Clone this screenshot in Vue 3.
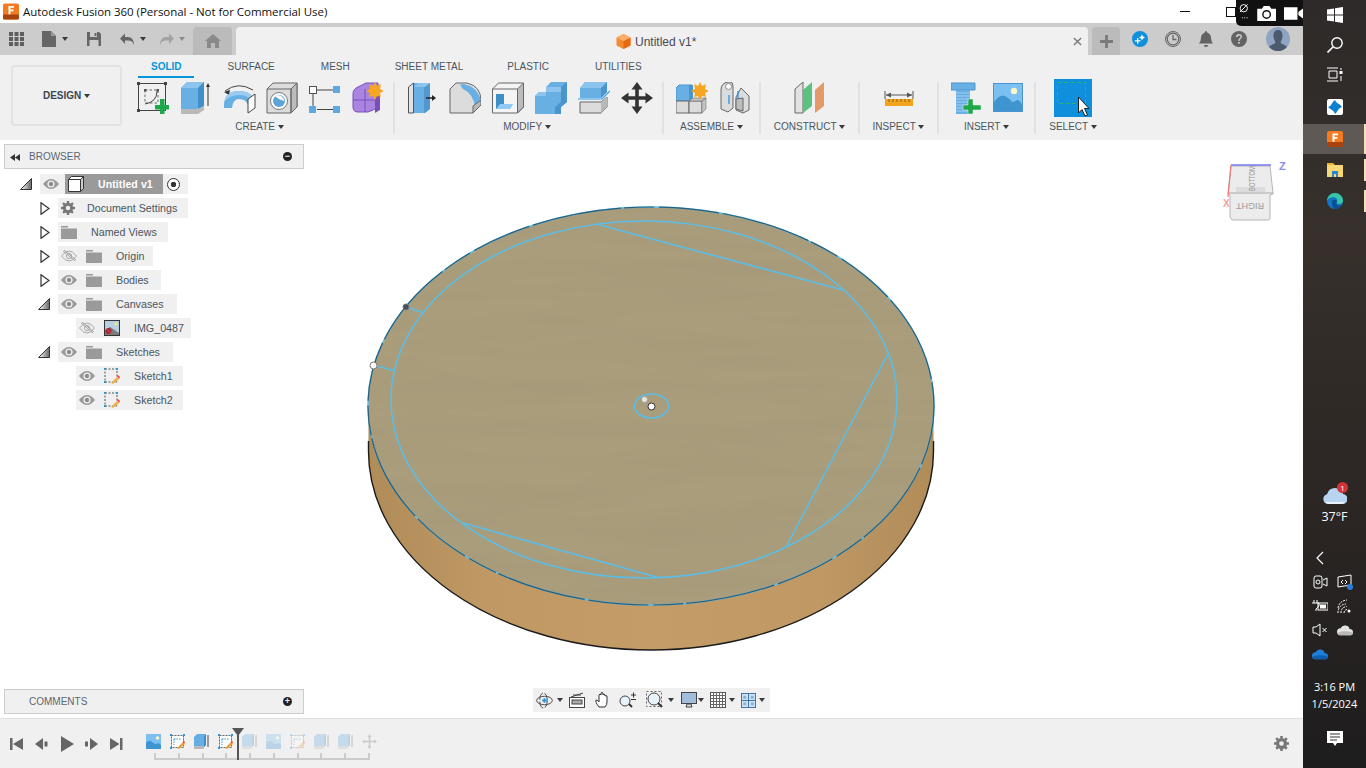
<script setup>
const ribbonTabs = ["SOLID", "SURFACE", "MESH", "SHEET METAL", "PLASTIC", "UTILITIES"];

const tree = [
  { left: 40, arrow: "open", eye: "on", icon: "root", label: "Untitled v1", width: 148 },
  { left: 58, arrow: "closed", icon: "gear", label: "Document Settings", gap: 12, width: 130 },
  { left: 58, arrow: "closed", icon: "folder", label: "Named Views", gap: 14, width: 110 },
  { left: 58, arrow: "closed", eye: "off", icon: "folder", label: "Origin", gap: 14, width: 95 },
  { left: 58, arrow: "closed", eye: "on", icon: "folder", label: "Bodies", gap: 14, width: 103 },
  { left: 58, arrow: "open", eye: "on", icon: "folder", label: "Canvases", gap: 14, width: 119 },
  { left: 76, eye: "off", icon: "canvas", label: "IMG_0487", gap: 14, width: 115 },
  { left: 58, arrow: "open", eye: "on", icon: "folder", label: "Sketches", gap: 14, width: 115 },
  { left: 76, eye: "on", icon: "sketch", label: "Sketch1", gap: 14, width: 107 },
  { left: 76, eye: "on", icon: "sketch", label: "Sketch2", gap: 14, width: 107 },
];

const history = [
  { icon: "t-image" },
  { icon: "t-sketch" },
  { icon: "t-extrude" },
  { icon: "t-sketch" },
  { icon: "t-extrude", faded: true },
  { icon: "t-image", faded: true },
  { icon: "t-sketch", faded: true },
  { icon: "t-extrude", faded: true },
  { icon: "t-extrude", faded: true },
  { icon: "t-move", faded: true },
];
</script>

<template>
  <div class="screen">
    <svg class="sprite" aria-hidden="true">
      <defs>
        <symbol id="t-image" viewBox="0 0 15 15">
          <rect width="15" height="15" fill="#7cc0f2" />
          <path d="M0 15V9q3-4 6-1 2 2 4 2 3-2 5 1v4z" fill="#3f95cf" />
          <circle cx="11.5" cy="4" r="1.8" fill="#fbf6c8" />
        </symbol>
        <symbol id="t-sketch" viewBox="0 0 15 15">
          <rect x="1.5" y="1.5" width="12" height="12" fill="#fff" stroke="#666" stroke-dasharray="2 1" />
          <path d="M0 0h2v2H0zM13 0h2v2h-2zM0 13h2v2H0z" fill="#2c97de" />
          <path d="M4 5h7M4 5v6" stroke="#2c97de" stroke-dasharray="1.5 1" fill="none" />
          <path d="M7 14l6-6 2 2-6 5z" fill="#e8a13a" />
          <path d="M12.5 8l1.5-1.5 1 2-1 1z" fill="#e64545" />
        </symbol>
        <symbol id="t-extrude" viewBox="0 0 15 15">
          <path d="M0 3l3-3h9v11l-2 2H0z" fill="#65ade3" />
          <path d="M0 12h10v3H0z" fill="#b9b9b9" />
          <path d="M10 3l2-3v11l-2 2z" fill="#3f8ec6" />
          <path d="M14 1v12" stroke="#444" />
        </symbol>
        <symbol id="t-move" viewBox="0 0 15 15">
          <path d="M7.500 0l2 3h-1.200v3.700H12V5.500l3 2-3 2V8.300H8.300V12h1.200l-2 3-2-3h1.200V8.300H3v1.200l-3-2 3-2v1.200h3.700V3H5.500z" fill="#777" />
        </symbol>
        <symbol id="eye-on" viewBox="0 0 16 12">
          <path d="M0 6q4-5 8-5t8 5q-4 5-8 5T0 6z" fill="#9a9a9a" />
          <circle cx="8" cy="6" r="3.600" fill="#f0f0f0" />
          <circle cx="8" cy="6" r="2.200" fill="#8c8c8c" />
        </symbol>
        <symbol id="eye-off" viewBox="0 0 16 12">
          <path d="M.5 6q4-5 7.500-5t7.500 5q-4 5-7.500 5T.5 6z" fill="none" stroke="#a5a5a5" />
          <circle cx="8" cy="6" r="2.600" fill="none" stroke="#a5a5a5" />
          <path d="M2 1l12 10M3 0l12 10" stroke="#a5a5a5" />
        </symbol>
        <symbol id="folder" viewBox="0 0 16 14">
          <path d="M0 1h7v1.500H0zM0 3.500h16V14H0z" fill="#9a9a9a" />
        </symbol>
        <symbol id="gear" viewBox="0 0 14 14">
          <circle cx="7" cy="7" r="3.700" fill="none" stroke="#777" stroke-width="3" />
          <path d="M7 0v14M0 7h14M2 2l10 10M12 2L2 12" stroke="#777" stroke-width="2.400" stroke-dasharray="2.300 9.400" />
        </symbol>
        <symbol id="canvas" viewBox="0 0 16 16">
          <rect x=".5" y=".5" width="15" height="15" fill="#b7cfe0" stroke="#333" />
          <path d="M1 15V10l5-3 9 6v2z" fill="#7b7b7b" />
          <circle cx="12" cy="4" r="1.600" fill="#f3e58b" />
          <circle cx="4.500" cy="11" r="3" fill="#a32a35" />
          <path d="M2.500 9l4 4" stroke="#e1434f" />
        </symbol>
        <symbol id="sketch" viewBox="0 0 16 16">
          <rect x="1" y="1" width="12" height="13" fill="none" stroke="#555" stroke-dasharray="2 1.500" />
          <path d="M0 0h2v2H0zM12 0h2v2h-2zM0 13h2v2H0z" fill="#2c97de" />
          <path d="M7 15l6-6 2 2-6 5z" fill="#ecb044" />
          <path d="M13 8l1-1 2 2-1 2z" fill="#e64545" />
        </symbol>
      </defs>
    </svg>

    <div class="app">
      <header class="titlebar">
        <svg class="title-logo" viewBox="0 0 16 16">
          <rect width="16" height="16" rx="2" fill="#f47a20" />
          <rect y="11" width="16" height="5" rx="1" fill="#a8430f" />
          <path d="M5.500 2.500h5.500v1.800H7.500v1.700h3v1.700h-3v3h-2z" fill="#fff" />
        </svg>
        <span class="title-text">Autodesk Fusion 360 (Personal - Not for Commercial Use)</span>
        <div class="win-controls">
          <span class="win-min"></span>
          <span class="win-restore"></span>
        </div>
      </header>

      <div class="tabbar">
        <div class="quick">
          <svg class="q-grid" viewBox="0 0 15 14">
            <path d="M0 0h4v4H0zM5.500 0h4v4h-4zM11 0h4v4h-4zM0 5h4v4H0zM5.500 5h4v4h-4zM11 5h4v4h-4zM0 10h4v4H0zM5.500 10h4v4h-4zM11 10h4v4h-4z" fill="#5f5f5f" />
          </svg>
          <svg class="q-file" viewBox="0 0 14 16"><path d="M0 0h9l5 5v11H0z" fill="#666" /><path d="M9 0v5h5z" fill="#999" /></svg>
          <i class="caret q-caret1"></i>
          <svg class="q-save" viewBox="0 0 14 14">
            <path d="M0 0h12l2 2v12H0z" fill="#666" />
            <path d="M3 0h7v5H3zM2.500 8h9v6h-9z" fill="#ccc" />
            <path d="M7.500 1h2v3h-2z" fill="#666" />
          </svg>
          <svg class="q-undo" viewBox="0 0 14 12"><path d="M5 0v3.500h3q6 0 6 8.500-1-5-6-5H5v3.500L0 5z" fill="#666" /></svg>
          <i class="caret q-caret2"></i>
          <svg class="q-redo" viewBox="0 0 14 12"><path d="M9 0v3.500H6Q0 3.500 0 12q1-5 6-5h3v3.500L14 5z" fill="#a3a3a3" /></svg>
          <i class="caret q-caret3"></i>
        </div>
        <div class="home-tab">
          <svg viewBox="0 0 16 14"><path d="M8 0l8 7h-2v7h-4V9H6v5H2V7H0z" fill="#8a8a8a" /></svg>
        </div>
        <div class="doc-tab">
          <div class="doc-title">
            <svg viewBox="0 0 15 15">
              <path d="M7.500 0L14.500 3.500v8L7.500 15 .5 11.500v-8z" fill="#f48b30" />
              <path d="M7.500 7L14.500 3.500v8L7.500 15z" fill="#e76a12" />
              <path d="M7.500 0L14.500 3.500 7.500 7 .5 3.500z" fill="#f9ae6b" />
            </svg>
            <span>Untitled v1*</span>
          </div>
          <svg class="doc-close" viewBox="0 0 10 10"><path d="M1 1l8 8M9 1l-8 8" stroke="#777" stroke-width="1.500" /></svg>
        </div>
        <div class="plus-tab">
          <svg viewBox="0 0 14 14"><path d="M5.500 0h3v5.500H14v3H8.500V14h-3V8.500H0v-3h5.500z" fill="#7a7a7a" /></svg>
        </div>
        <div class="account">
          <svg class="a-ext" viewBox="0 0 16 16">
            <circle cx="8" cy="8" r="8" fill="#0f8fdc" />
            <path d="M5 7v2.200H2.800v1.300H5v2.200h1.300v-2.200h2.200V9.200H6.300V7z" fill="#fff" />
            <path d="M10 3.500l1 2 2 1-2 1-1 2-1-2-2-1 2-1z" fill="#fff" />
          </svg>
          <svg class="a-clock" viewBox="0 0 16 16">
            <circle cx="8" cy="8" r="7.500" fill="none" stroke="#666" />
            <circle cx="8" cy="8" r="5.800" fill="none" stroke="#666" stroke-width="1.300" />
            <path d="M8 4v4.500h3.500" fill="none" stroke="#666" stroke-width="1.300" />
          </svg>
          <svg class="a-bell" viewBox="0 0 14 16">
            <path d="M7 0q1.200 0 1.200 1.500Q12 3 12 7q0 3 2 5.500H0Q2 10 2 7q0-4 3.800-5.500Q5.800 0 7 0z" fill="#636363" />
            <path d="M5 14h4a2 2 0 0 1-4 0z" fill="#636363" />
          </svg>
          <svg class="a-help" viewBox="0 0 16 16">
            <circle cx="8" cy="8" r="8" fill="#636363" />
            <path d="M5 6q0-3 3-3t3 2.700q0 1.500-1.500 2.300Q8.700 8.500 8.700 10H7.200q0-2.200 1.500-3 .9-.5.900-1.200 0-1.300-1.500-1.300-1.400 0-1.500 1.500zM7.100 11h1.700v1.800H7.100z" fill="#ccc" />
          </svg>
          <svg class="a-user" viewBox="0 0 24 24">
            <circle cx="12" cy="12" r="12" fill="#8ea4c1" />
            <path d="M12 3q5 0 4.500 7-.5 3-2 5 0 1.500 3 2.500Q20 18.500 21 20a12 12 0 0 1-18 0q1-1.500 3.500-2.500 3-1 3-2.500-1.500-2-2-5Q7 3 12 3z" fill="#4c5a70" />
          </svg>
        </div>
      </div>

      <div class="toolbar">
        <button class="design">DESIGN <i class="caret"></i></button>
        <div class="ribbon">
          <nav class="ribbon-tabs">
            <span v-for="(t, i) in ribbonTabs" :key="t" :class="{ active: i === 0 }">{{ t }}</span>
          </nav>
          <div class="groups">
            <section class="group g-create">
              <div class="icons">
                <svg class="ico" viewBox="0 0 32 32">
                  <rect x="1.500" y="1.500" width="27" height="27" fill="none" stroke="#444" />
                  <path d="M0 0h3v3H0zM27 0h3v3h-3zM0 27h3v3H0z" fill="#444" />
                  <rect x="8" y="8" width="13" height="13" fill="none" stroke="#666" stroke-dasharray="2.500 2" />
                  <path d="M20 9q0 11-12 13" fill="none" stroke="#444" />
                  <path d="M7 7h2.500v2.500H7zM19.500 7H22v2.500h-2.500z" fill="#555" />
                  <path d="M23 17h4.500v6H32v4.500h-4.500V32H23v-4.500h-5V23h5z" fill="#1fa84a" />
                </svg>
                <svg class="ico" viewBox="0 0 32 32">
                  <path d="M1 6l6-6h17v24l-7 3H1z" fill="#68afe4" />
                  <path d="M1 6L7 0h17l-6 6z" fill="#8cc4ee" />
                  <path d="M18 6l6-6v24l-6 3z" fill="#418fc9" />
                  <path d="M1 27h17l6-3v4l-6 4H1z" fill="#b9b9b9" />
                  <path d="M28 24V3" stroke="#333" />
                  <path d="M26 5l2-4 2 4z" fill="#333" />
                </svg>
                <svg class="ico ico-wide" viewBox="0 0 34 32">
                  <path d="M2 9Q15-1 30 8" fill="none" stroke="#444" />
                  <path d="M1 10l6-2-1 5z" fill="#333" />
                  <path d="M1 26Q0 9 16 9q10 0 14 6l-5 8q-2-6-9-6-6 0-7 9z" fill="#68afe4" />
                  <path d="M2 17Q6 9 16 9q10 0 14 6l-2 3q-4-5-12-5-9 0-14 6z" fill="#9acbf0" />
                  <path d="M25 17l7-5v14l-7 5z" fill="#fff" stroke="#444" />
                </svg>
                <svg class="ico" viewBox="0 0 32 32">
                  <path d="M1 7l6-6h24v24l-6 6H1z" fill="#dcdcdc" stroke="#666" />
                  <path d="M25 7l6-6v24l-6 6z" fill="#bcbcbc" stroke="#666" />
                  <path d="M1 7h24v24" fill="none" stroke="#666" />
                  <circle cx="13" cy="19" r="8.500" fill="#fff" stroke="#777" />
                  <circle cx="13" cy="19" r="6" fill="#5ba4da" />
                  <path d="M9 14a6 6 0 0 1 9 5q-3-1-5-2t-4-3z" fill="#fff" />
                </svg>
                <svg class="ico" viewBox="0 0 32 32">
                  <rect x=".5" y="4.500" width="7" height="7" fill="#fff" stroke="#555" />
                  <rect x="24" y="4" width="7" height="7" fill="#5ea9e0" />
                  <rect y="24" width="7" height="7" fill="#5ea9e0" />
                  <rect x="24" y="24" width="7" height="7" fill="#5ea9e0" />
                  <path d="M8 8h16M4 12v12M8 27.500h16" stroke="#444" />
                </svg>
                <svg class="ico" viewBox="0 0 32 32">
                  <path d="M1 12q0-5 5-7l8-4h12v20q0 5-5 7l-5 2H6q-5 0-5-5z" fill="#a984e0" stroke="#7650b8" />
                  <path d="M1 18h23M13 7v23" stroke="#7650b8" />
                  <path d="M23 15l5-2v15l-5 3z" fill="#7650b8" />
                  <path d="M23 0l2 4 4-2-1 5 4 2-4 2 1 4-4-1-2 4-2-4-4 1 1-4-4-2 4-2-1-5 4 2z" fill="#f5a623" />
                </svg>
              </div>
              <div class="g-label">CREATE <i class="caret"></i></div>
            </section>

            <section class="group g-modify">
              <div class="icons">
                <svg class="ico" viewBox="0 0 32 32">
                  <path d="M2.500 5l5-4v30h-5z" fill="#e2e2e2" stroke="#555" />
                  <path d="M8 1h16v26l-5 4H8z" fill="#5098cf" />
                  <path d="M8 1h10v30H8z" fill="#68afe4" />
                  <path d="M8 5l4-4h12l-5 4z" fill="#8cc4ee" />
                  <path d="M20 16h8" stroke="#222" stroke-width="1.500" />
                  <path d="M26 13l4 3-4 3z" fill="#222" />
                </svg>
                <svg class="ico" viewBox="0 0 32 32">
                  <path d="M1 7l6-6h11q14 3 14 18v4l-8 8H1z" fill="#dcdcdc" stroke="#666" />
                  <path d="M13 2q14 1 19 16l-6 8q-1-14-12-19l-3-4z" fill="#68afe4" />
                  <path d="M32 18v5l-8 8V24z" fill="#b9b9b9" stroke="#666" />
                </svg>
                <svg class="ico" viewBox="0 0 32 32">
                  <path d="M.5 7l6-6h25v24l-6 6H.5z" fill="#f4f4f4" stroke="#666" />
                  <path d="M25.500 7l6-6v24l-6 6z" fill="#bdbdbd" stroke="#666" />
                  <path d="M.5 7h25v24" fill="none" stroke="#666" />
                  <path d="M4 12h8v15H4z" fill="#3f8ec6" />
                  <path d="M12 12h7v10h-7z" fill="#f4f4f4" />
                  <path d="M4 27l4-5h13l-3 5z" fill="#8fcaf6" />
                  <path d="M12 22h9l-3 5H7z" fill="#8fcaf6" />
                </svg>
                <svg class="ico" viewBox="0 0 32 32">
                  <path d="M11 5l5-5h16v20l-6 5v7H0V14l4-4h7z" fill="#68afe4" />
                  <path d="M11 5h15v5H11zM0 14l4-4h7v4z" fill="#8cc4ee" />
                  <path d="M26 5l6-5v20l-6 5zM20 25l6-5v12h-6z" fill="#4a95cd" />
                </svg>
                <svg class="ico" viewBox="0 0 32 32">
                  <path d="M2 6l5-6h22v10l-6 6H2z" fill="#68afe4" />
                  <path d="M2 6l5-6h22l-6 6z" fill="#8cc4ee" />
                  <path d="M23 6l6-6v10l-6 6z" fill="#4a95cd" />
                  <path d="M0 17h24l8-8" stroke="#2f9be6" stroke-width="1.200" fill="none" />
                  <path d="M2 20h21l6-5v10l-6 6H2z" fill="#dcdcdc" stroke="#666" />
                  <path d="M23 20l6-5v10l-6 6z" fill="#b9b9b9" />
                </svg>
                <svg class="ico" viewBox="0 0 32 32">
                  <path d="M16 0l5.500 7.500h-3.700v6.700h6.700v-3.700L32 16l-7.500 5.500v-3.700h-6.700v6.700h3.700L16 32l-5.500-7.500h3.700v-6.700H7.500v3.700L0 16l7.500-5.500v3.700h6.700V7.500h-3.700z" fill="#333" />
                </svg>
              </div>
              <div class="g-label">MODIFY <i class="caret"></i></div>
            </section>

            <section class="group g-assemble">
              <div class="icons">
                <svg class="ico" viewBox="0 0 32 32">
                  <path d="M0 6l3-3h13v16H0z" fill="#68afe4" stroke="#4a95cd" />
                  <path d="M13 3h4v16h-4z" fill="#4a95cd" />
                  <path d="M0 19h13v12H0z" fill="#dcdcdc" stroke="#666" />
                  <path d="M13 19h13v12H13z" fill="#dcdcdc" stroke="#666" />
                  <path d="M13 19l4-3h13l-4 3zM26 19l4-3v11l-4 4z" fill="#c4c4c4" stroke="#777" stroke-width=".6" />
                  <path d="M24 0l2 4 4-2-1 5 4 2-4 2 1 4-4-1-2 4-2-4-4 1 1-4-4-2 4-2-1-5 4 2z" fill="#f5a623" />
                </svg>
                <svg class="ico" viewBox="0 0 30 32">
                  <path d="M1 8q0-7 7-8h2q3 0 3 4v22l-5 4-7-3z" fill="#dcdcdc" stroke="#666" />
                  <circle cx="8.500" cy="4.500" r="3" fill="#fff" stroke="#888" />
                  <path d="M16 15l5-9 8 8v14l-6 3-7-3z" fill="#dcdcdc" stroke="#666" />
                  <path d="M16 17l7-1v13l-7-2z" fill="#bdbdbd" stroke="#666" />
                  <path d="M9 13v9M18 9v8" stroke="#1c8ee0" stroke-width="1.200" />
                </svg>
              </div>
              <div class="g-label">ASSEMBLE <i class="caret"></i></div>
            </section>

            <section class="group g-construct">
              <div class="icons">
                <svg class="ico" viewBox="0 0 32 32">
                  <path d="M1 7l8-7v31H1z" fill="#e2e2e2" stroke="#666" />
                  <path d="M9 31V8l9-8v24z" fill="#5bc17f" />
                  <path d="M21 31V8l9-8v24z" fill="#e49a68" />
                </svg>
              </div>
              <div class="g-label">CONSTRUCT <i class="caret"></i></div>
            </section>

            <section class="group g-inspect">
              <div class="icons">
                <svg class="ico" viewBox="0 0 32 32">
                  <path d="M2 9v8M30 9v8M3 13h26" stroke="#555" />
                  <path d="M3 13l5-2.500v5zM29 13l-5-2.500v5z" fill="#555" />
                  <rect x="2" y="17" width="28" height="7" fill="#f2a51c" />
                  <path d="M6 17v3M10 17v3M14 17v3M18 17v3M22 17v3M26 17v3" stroke="#8a5f10" />
                </svg>
              </div>
              <div class="g-label">INSPECT <i class="caret"></i></div>
            </section>

            <section class="group g-insert">
              <div class="icons">
                <svg class="ins-bolt" viewBox="0 0 30 32">
                  <path d="M0 1h24v7H0z" fill="#68afe4" stroke="#4a95cd" />
                  <path d="M5 8h14v24H5z" fill="#68afe4" />
                  <path d="M5 11h14M5 14h14M5 17h14M5 20h14M5 23h14M5 26h14M5 29h14" stroke="#a0d0f2" />
                  <path d="M17 17h5v6h8v5h-8v4h-5v-4h-5v-5h5z" fill="#1fa84a" stroke="#f0f0f0" stroke-width=".5" />
                </svg>
                <svg class="ins-image" viewBox="0 0 30 30">
                  <rect x=".5" y=".5" width="29" height="28" fill="#7cc0f2" stroke="#4a95cd" />
                  <path d="M1 28V19q6-8 11-6 4 2 7 6 3 0 5-2 3 0 5 5v6z" fill="#3f95cf" />
                  <circle cx="21" cy="8" r="3.200" fill="#fbf6c8" />
                </svg>
              </div>
              <div class="g-label">INSERT <i class="caret"></i></div>
            </section>

            <section class="group g-select">
              <div class="icons">
                <svg class="sel-ico" viewBox="0 0 38 38">
                  <rect width="38" height="38" fill="#0f8fdc" />
                  <rect x="3.500" y="3.500" width="28" height="21" fill="none" stroke="#2bb36a" stroke-dasharray="4 2.500" />
                  <path d="M24.500 18v16l3.500-3.500 3 6.500 2.500-1-3-6.500H35z" fill="#fff" stroke="#222" />
                </svg>
              </div>
              <div class="g-label">SELECT <i class="caret"></i></div>
            </section>
          </div>
        </div>
      </div>

      <main class="canvas">
        <svg class="scene" viewBox="0 140 1303 578">
          <defs>
            <linearGradient id="side" x1="0" x2="1" y1="0" y2="0">
              <stop offset="0" stop-color="#b08c58" />
              <stop offset=".2" stop-color="#bf9864" />
              <stop offset=".5" stop-color="#c49c68" />
              <stop offset=".8" stop-color="#bf9864" />
              <stop offset="1" stop-color="#b08c58" />
            </linearGradient>
            <clipPath id="top-clip"><ellipse cx="651" cy="406" rx="283" ry="199" /></clipPath>
            <filter id="streaks" x="0" y="0" width="100%" height="100%">
              <feTurbulence type="fractalNoise" baseFrequency="0.005 0.05" numOctaves="3" seed="7" />
              <feColorMatrix values="0 0 0 0 0.35  0 0 0 0 0.30  0 0 0 0 0.18  0.7 0 0 0 -0.24" />
            </filter>
          </defs>

          <rect x="368.500" y="406" width="565" height="45" fill="url(#side)" />
          <ellipse cx="651" cy="451" rx="282.500" ry="199" fill="url(#side)" />
          <path d="M368.500 441v10A282.500 199 0 0 0 933.500 451v-10" fill="none" stroke="#1a1a1a" stroke-width="1.400" />
          <ellipse cx="651" cy="406" rx="283" ry="199" fill="#aa9d7c" />
          <rect x="368" y="207" width="566" height="398" fill="#000" filter="url(#streaks)" clip-path="url(#top-clip)" />
          <ellipse cx="651" cy="406" rx="283" ry="199" fill="none" stroke="#5cbde6" stroke-width="1.500" />
          <ellipse cx="651" cy="406" rx="283" ry="199" fill="none" stroke="#2a5f7a" stroke-width="1.200" stroke-dasharray="60 4 90 3 30 5" />

          <g fill="none" stroke="#5cbde6" stroke-width="1.600">
            <ellipse cx="644" cy="399.500" rx="253" ry="178.500" />
            <path d="M596 224L843 290M889 352L786 547M660 578L463 523M406 307L424 313M374 365L395 371" />
            <ellipse cx="651.500" cy="406" rx="17" ry="12" />
          </g>
          <circle cx="406" cy="307" r="3" fill="#47505a" stroke="#777" />
          <circle cx="373.500" cy="365.500" r="3.500" fill="#fff" stroke="#777" />
          <circle cx="644.500" cy="399.500" r="3.200" fill="#e4e4d8" stroke="#999" />
          <circle cx="651.500" cy="406.500" r="3.500" fill="#fff" stroke="#333" />

          <g class="viewcube">
            <path d="M1231 166h39l3 27v1l-3 1v24l-1 1h-37l-2-3v-22l-2-1v-1z" fill="#ececec" stroke="#b5b5b5" />
            <path d="M1236 187h29v5h-29z" fill="#dcdcdc" />
            <path d="M1229 193h44" stroke="#a8a8a8" />
            <path d="M1231 165h40" stroke="#7777ee" stroke-width="1.500" />
            <path d="M1231 165l-3 32" stroke="#e77" stroke-width="1.200" />
            <text class="vc-z" x="1279" y="170">Z</text>
            <text class="vc-x" x="1223" y="207">X</text>
            <text class="vc-t" transform="translate(1255 191) rotate(-90) scale(.65 1)">BOTTOM</text>
            <text class="vc-t" transform="translate(1264 203) rotate(180)">RIGHT</text>
          </g>
        </svg>

        <aside class="side">
          <div class="panel">
            <svg class="p-rew" viewBox="0 0 10 7"><path d="M5 0v7L0 3.500zM10 0v7L5 3.500z" fill="#333" /></svg>
            <span class="p-title">BROWSER</span>
            <span class="p-btn">−</span>
          </div>
          <ul class="tree">
            <li v-for="row in tree" :key="row.label" class="row">
              <span class="arrow-cell" :style="{ width: row.left + 'px' }">
                <svg v-if="row.arrow === 'open'" class="arrow-open" viewBox="0 0 12 12">
                  <defs>
                    <linearGradient id="tri" x1="0" x2="1"><stop offset="0" stop-color="#fff" /><stop offset="1" stop-color="#666" /></linearGradient>
                  </defs>
                  <path d="M.5 11.500L11.500 .5v11z" fill="url(#tri)" stroke="#333" />
                </svg>
                <svg v-else-if="row.arrow === 'closed'" class="arrow-closed" viewBox="0 0 10 13">
                  <path d="M1 .7L9 6.500 1 12.300z" fill="#fff" stroke="#333" stroke-width="1.200" />
                </svg>
              </span>
              <span class="chip" :style="{ width: row.width + 'px' }">
                <svg v-if="row.eye" class="eye" viewBox="0 0 16 12"><use :href="'#eye-' + row.eye" /></svg>
                <template v-if="row.icon === 'root'">
                  <span class="root-bar">
                    <svg viewBox="0 0 16 16">
                      <path d="M.5 3.500L3.500 .5h12v12l-3 3H.5z" fill="#fff" stroke="#333" />
                      <path d="M12.500 3.500l3-3v12l-3 3z" fill="#ccc" stroke="#333" />
                      <path d="M.5 3.500h12v12" fill="none" stroke="#333" />
                    </svg>
                    <b>Untitled v1</b>
                  </span>
                  <span class="radio"></span>
                </template>
                <template v-else>
                  <svg class="tree-ico" :class="row.icon" viewBox="0 0 16 16"><use :href="'#' + row.icon" /></svg>
                  <span class="row-label" :style="{ marginLeft: row.gap + 'px' }">{{ row.label }}</span>
                </template>
              </span>
            </li>
          </ul>
        </aside>

        <div class="panel comments">
          <span class="p-title">COMMENTS</span>
          <span class="p-btn">+</span>
        </div>

        <div class="navbar">
          <svg class="n-orbit" viewBox="0 0 18 18">
            <ellipse cx="9" cy="9" rx="8.300" ry="4.500" fill="none" stroke="#444" />
            <ellipse cx="8" cy="9" rx="4" ry="8" fill="none" stroke="#444" stroke-dasharray="8 2" />
            <path d="M8 6.500h2v1.500h1.500v2H10v1.500H8V10H6.500V8H8z" fill="#2c97de" />
          </svg>
          <i class="caret"></i>
          <svg class="n-look" viewBox="0 0 16 16">
            <rect x=".5" y="5.500" width="15" height="10" fill="#fff" stroke="#444" />
            <rect x="3" y="8" width="10" height="4" fill="#aaa" stroke="#444" />
            <path d="M2 5l12-4M4 3l8 0" stroke="#444" />
          </svg>
          <svg class="n-pan" viewBox="0 0 16 16">
            <path d="M4 15Q0 10 1 8q2 0 3 2V3q1-2 2 0V1q1-1 2 0v2q1-2 2 0v1q1-1 2 0v6q0 3-2 5z" fill="#fff" stroke="#333" />
          </svg>
          <svg class="n-zoom" viewBox="0 0 18 16">
            <circle cx="6" cy="9" r="5" fill="#e9f3fa" stroke="#444" />
            <path d="M10 12l3 3" stroke="#333" stroke-width="2" />
            <path d="M12 3h5M14.500 .5v5M12 7.500h5" stroke="#333" />
          </svg>
          <svg class="n-fit" viewBox="0 0 18 18">
            <rect x=".5" y=".5" width="15" height="15" fill="none" stroke="#666" stroke-dasharray="2 2" />
            <circle cx="8" cy="8" r="6" fill="#e9f3fa" stroke="#444" />
            <path d="M12 12l4 4" stroke="#333" stroke-width="2" />
          </svg>
          <i class="caret"></i>
          <svg class="n-display" viewBox="0 0 16 16">
            <rect x=".5" y=".5" width="15" height="11" fill="#a3bedc" stroke="#444" />
            <path d="M5 15h6l-1-3H6z" fill="#ddd" stroke="#444" />
          </svg>
          <i class="caret"></i>
          <svg class="n-grid" viewBox="0 0 16 16">
            <rect x=".5" y=".5" width="15" height="15" fill="#fff" stroke="#555" />
            <path d="M3.500 0v16M6.500 0v16M9.500 0v16M12.500 0v16M0 3.500h16M0 6.500h16M0 9.500h16M0 12.500h16" stroke="#666" />
          </svg>
          <i class="caret"></i>
          <svg class="n-views" viewBox="0 0 16 16">
            <rect x=".5" y=".5" width="15" height="15" fill="#cfe2f3" stroke="#3a6ea5" />
            <path d="M8 0v16M0 8h16" stroke="#3a6ea5" />
            <path d="M2.500 3h3v3h-3zM10.500 3h3v3h-3zM2.500 10h3v3h-3zM10.500 10h3v3h-3z" fill="#88aed2" />
          </svg>
          <i class="caret"></i>
        </div>
      </main>

      <footer class="timeline">
        <div class="transport">
          <svg viewBox="0 0 14 14"><path d="M0 1h2.500v12H0zM13 1v12L3 7z" fill="#666" /></svg>
          <svg viewBox="0 0 14 14"><path d="M0 7l8-6v12zM9.500 4.500h3v5h-3z" fill="#666" /></svg>
          <svg class="t-play" viewBox="0 0 14 16"><path d="M1 0l13 8-13 8z" fill="#666" /></svg>
          <svg viewBox="0 0 14 14"><path d="M5 1l8 6-8 6zM0 4.500h3v5H0z" fill="#666" /></svg>
          <svg viewBox="0 0 14 14"><path d="M0 1l9.500 6L0 13zM10 1h2.500v12H10z" fill="#666" /></svg>
        </div>
        <div class="history">
          <svg v-for="(h, i) in history" :key="i" class="h-ico" :class="{ faded: h.faded }" viewBox="0 0 15 15">
            <use :href="'#' + h.icon" />
          </svg>
          <div class="h-rail">
            <span v-for="n in 10" :key="n"></span>
          </div>
          <div class="h-marker"></div>
        </div>
        <svg class="t-gear" viewBox="0 0 14 14"><use href="#gear" /></svg>
      </footer>
    </div>

    <div class="capture">
      <svg class="c-pin" viewBox="0 0 10 20">
        <circle cx="5" cy="5" r="3.800" fill="none" stroke="#fff" />
        <path d="M1 9l8-8M3 15h1M5.500 15h1M8 15h1" stroke="#fff" />
      </svg>
      <svg class="c-cam" viewBox="0 0 20 16">
        <path d="M0 3h5l2-3h6l2 3h5v13H0z" fill="#fff" />
        <circle cx="10" cy="9" r="4" fill="none" stroke="#111" stroke-width="1.500" />
      </svg>
      <svg class="c-vid" viewBox="0 0 20 13">
        <path d="M0 0h14v13H0zM15 5l5-4v11l-5-4z" fill="#fff" />
      </svg>
    </div>

    <aside class="taskbar">
      <div class="task"><svg viewBox="0 0 16 16"><path d="M0 2.500l7-1v6H0zM8 1.300l8-1.300v7.500H8zM0 8.500h7v6l-7-1zM8 8.500h8V16l-8-1.300z" fill="#fff" /></svg></div>
      <div class="task"><svg viewBox="0 0 16 16"><circle cx="10" cy="6" r="5.200" fill="none" stroke="#fff" stroke-width="1.400" /><path d="M6 10l-5.500 5.500" stroke="#fff" stroke-width="1.600" /></svg></div>
      <div class="task"><svg viewBox="0 0 16 16"><path d="M0 1h11M0 14h11M2 4h8v7H2zM14 1v2M14 9v5" fill="none" stroke="#fff" /><rect x="12.500" y="4" width="3" height="3" fill="#fff" /></svg></div>
      <div class="task t-tile"><svg viewBox="0 0 16 16"><rect width="16" height="16" rx="2" fill="#fff" /><path d="M8 1q1 3 3 3.500T15 8q-3 1-4 3t-3 4q-1-3-3-4T1 8q3-1 4-3.500T8 1z" fill="#0b7fd0" /></svg></div>
      <div class="task active"><svg viewBox="0 0 16 16"><rect width="16" height="16" rx="2" fill="#f47a20" /><rect y="11" width="16" height="5" rx="1" fill="#a8430f" /><path d="M5.500 2.500h5.500v1.800H7.500v1.700h3v1.700h-3v3h-2z" fill="#fff" /></svg></div>
      <div class="task running"><svg viewBox="0 0 16 14"><path d="M0 0h6l2 2H0z" fill="#eab42c" /><path d="M0 2h16v12H0z" fill="#f8d775" /><path d="M5 8h6v6H9v-3H7v3H5z" fill="#2a86d1" /></svg></div>
      <div class="task running"><svg viewBox="0 0 16 16"><circle cx="8" cy="8" r="8" fill="#1173c4" /><path d="M0 8a8 8 0 0 1 16 0c0 2-2 3-4 3-2 0-3-1-3-2 1 0 2-1 1-3-2-3-9-2-10 2z" fill="#37c6a5" /><path d="M5 10q0-4 4-3 2 2 0 4 2 3 6 1-2 4-7 4-3-2-3-6z" fill="#0b4e94" /></svg></div>

      <div class="weather">
        <svg viewBox="0 0 24 18">
          <path d="M5 18a5 5 0 0 1-1-9.800Q6 2 12 2q6 0 8 6a5 5 0 0 1-1 10z" fill="#b8d4f0" />
          <path d="M5 18a5 5 0 0 1-3-2h20a5 5 0 0 1-3 2z" fill="#e8f2fb" />
        </svg>
        <span class="badge">1</span>
        <div class="temp">37°F</div>
      </div>

      <div class="tray-chev"><svg viewBox="0 0 8 14"><path d="M7 1L1 7l6 6" fill="none" stroke="#fff" stroke-width="1.200" /></svg></div>
      <div class="tray">
        <svg viewBox="0 0 16 16"><rect x="2" y="2" width="8" height="12" rx="2" fill="none" stroke="#fff" /><circle cx="6" cy="8" r="2" fill="none" stroke="#fff" /><path d="M11 6l4-2v8l-4-2" fill="none" stroke="#fff" /></svg>
        <svg viewBox="0 0 16 16"><path d="M1 3l13-2v10L1 13z" fill="none" stroke="#fff" /><path d="M6 6l-2 2 2 2M8 6l2 2-2 2" fill="none" stroke="#fff" /><circle cx="13" cy="13" r="3" fill="#2a7ed8" /></svg>
        <svg viewBox="0 0 16 12"><path d="M2 0v3M5 0v3M0 3h7v3l-3 3v2" fill="none" stroke="#fff" /><rect x="6" y="3" width="10" height="7" fill="none" stroke="#fff" /><rect x="8" y="4.500" width="6" height="4" fill="#fff" /></svg>
        <svg viewBox="0 0 16 16"><path d="M1 15q0-8 8-9M4 15q0-6 6-6.500M7 15q0-3 4-4M1 10q1-7 9-8" fill="none" stroke="#fff" stroke-dasharray="2 1" /><circle cx="12" cy="13" r="1.500" fill="#fff" /></svg>
        <svg viewBox="0 0 16 14"><path d="M1 4h3l4-3v12L4 10H1z" fill="none" stroke="#fff" /><path d="M10.500 5l4 4M14.500 5l-4 4" stroke="#fff" /></svg>
        <svg viewBox="0 0 18 12"><path d="M4 12a4 4 0 0 1 0-8q2-4 6-3 4 1 4 4 4 0 4 3.500T14 12z" fill="#e3e3e3" /><path d="M1 9q8-3 17 0 0 3-4 3H4Q1 12 1 9z" fill="#b9b9b9" /></svg>
        <svg viewBox="0 0 18 12"><path d="M4 12a4 4 0 0 1 0-8q2-4 6-3 4 1 4 4 4 0 4 3.500T14 12z" fill="#1f7fd6" /><path d="M1 9q8-3 17 0 0 3-4 3H4Q1 12 1 9z" fill="#0f5fb0" /></svg>
      </div>
      <div class="clock">
        <div>3:16 PM</div>
        <div>1/5/2024</div>
      </div>
      <div class="notify">
        <svg viewBox="0 0 16 16"><path d="M0 0h16v12h-6l-2 3-2-3H0z" fill="#fff" /><path d="M3 3h10M3 6h10M3 9h7" stroke="#333" /></svg>
      </div>
    </aside>
  </div>
</template>

<style scoped>
.screen {
  display: flex;
  width: 1366px;
  height: 768px;
  overflow: hidden;
  position: relative;
  background: #fff;
  font-family: "Liberation Sans", Arial, sans-serif;
  color: #4a5560;
}
.sprite {
  position: absolute;
  width: 0;
  height: 0;
}
.app {
  width: 1303px;
  display: flex;
  flex-direction: column;
}
.caret {
  display: inline-block;
  width: 0;
  height: 0;
  border-left: 3px solid transparent;
  border-right: 3px solid transparent;
  border-top: 4px solid #3a3a3a;
  vertical-align: 1px;
}

/* title bar */
.titlebar {
  height: 23px;
  display: flex;
  align-items: center;
  padding-left: 3px;
  background: #fff;
  flex: none;
}
.title-logo {
  width: 16px;
  height: 17px;
}
.title-text {
  margin-left: 4px;
  font-family: "Open Sans", sans-serif;
  font-size: 11.5px;
  letter-spacing: -.04px;
  color: #111;
  white-space: nowrap;
}
.win-controls {
  margin-left: auto;
  display: flex;
  align-items: center;
  padding-right: 67px;
}
.win-min {
  width: 10px;
  height: 1px;
  background: #111;
}
.win-restore {
  width: 8px;
  height: 8px;
  border: 1px solid #111;
  margin-left: 36px;
}

/* document tabs */
.tabbar {
  height: 32px;
  flex: none;
  display: flex;
  align-items: flex-end;
  background: #ccc;
}
.quick {
  width: 193px;
  height: 28px;
  position: relative;
  flex: none;
}
.quick svg,
.quick .caret {
  position: absolute;
}
.q-grid { left: 9px; top: 5px; width: 15px; height: 14px; }
.q-file { left: 42px; top: 4px; width: 14px; height: 16px; }
.q-caret1 { left: 62px; top: 10px; }
.q-save { left: 87px; top: 5px; width: 14px; height: 14px; }
.q-undo { left: 120px; top: 6px; width: 14px; height: 13px; }
.q-caret2 { left: 140px; top: 10px; }
.q-redo { left: 160px; top: 6px; width: 14px; height: 13px; }
.q-caret3 { left: 179px; top: 10px; opacity: .45; }
.home-tab {
  width: 39px;
  height: 28px;
  background: #bbb;
  border-radius: 4px 4px 0 0;
  display: flex;
  align-items: center;
  justify-content: center;
  flex: none;
}
.home-tab svg {
  width: 16px;
  height: 14px;
}
.doc-tab {
  margin-left: 4px;
  width: 852px;
  height: 28px;
  background: #f0f0f0;
  border-radius: 4px 4px 0 0;
  position: relative;
  flex: none;
}
.doc-title {
  position: absolute;
  left: 380px;
  top: 7px;
  display: flex;
  align-items: center;
  gap: 4px;
  font-size: 12px;
  color: #4a4a55;
}
.doc-title svg {
  width: 15px;
  height: 15px;
}
.doc-close {
  position: absolute;
  right: 6px;
  top: 10px;
  width: 9px;
  height: 9px;
}
.plus-tab {
  margin-left: 4px;
  width: 28px;
  height: 28px;
  background: #bbb;
  border-radius: 4px 4px 0 0;
  display: flex;
  align-items: center;
  justify-content: center;
  flex: none;
}
.plus-tab svg {
  width: 13px;
  height: 13px;
}
.account {
  flex: 1;
  height: 28px;
  position: relative;
}
.account svg {
  position: absolute;
}
.a-ext { left: 12px; top: 4px; width: 16px; height: 16px; }
.a-clock { left: 45px; top: 4px; width: 16px; height: 16px; }
.a-bell { left: 79px; top: 4px; width: 14px; height: 16px; }
.a-help { left: 111px; top: 4px; width: 16px; height: 16px; }
.a-user { left: 146px; top: 0; width: 24px; height: 24px; }

/* ribbon */
.toolbar {
  height: 85px;
  flex: none;
  display: flex;
  background: #f0f0f0;
  padding-left: 11px;
}
.design {
  width: 111px;
  height: 61px;
  margin-top: 10px;
  flex: none;
  background: #f0f0f0;
  border: 2px solid #e2e2e2;
  border-radius: 4px;
  font: bold 10px "Liberation Sans", Arial, sans-serif;
  color: #3c4650;
  padding: 0;
}
.ribbon {
  margin-left: 15px;
  display: flex;
  flex-direction: column;
}
.ribbon-tabs {
  height: 27px;
  display: flex;
  gap: 46px;
  padding: 6px 0 0 14px;
  font-size: 10px;
  line-height: 12px;
  box-sizing: border-box;
  color: #4a5560;
}
.ribbon-tabs span {
  position: relative;
  white-space: nowrap;
}
.ribbon-tabs span:nth-child(3) {
  margin-right: -1px;
}
.ribbon-tabs span:nth-child(4) {
  margin-right: -2px;
}
.ribbon-tabs .active {
  color: #0696d7;
  font-weight: bold;
}
.ribbon-tabs .active::after {
  content: "";
  position: absolute;
  left: -13px;
  right: -12px;
  top: 15px;
  height: 2px;
  background: #0696d7;
}
.groups {
  display: flex;
  height: 52px;
}
.group {
  display: flex;
  flex-direction: column;
  align-items: center;
  border-right: 2px solid #e2e2e2;
  box-sizing: border-box;
  flex: none;
  height: 52px;
}
.g-create { width: 258px; padding-right: 9px; }
.g-modify { width: 269px; padding: 0 10px 0 12px; }
.g-assemble { width: 97px; padding: 0 10px 0 12px; align-items: flex-start; }
.g-construct { width: 99px; }
.g-inspect { width: 79px; }
.g-insert { width: 97px; }
.g-select { width: 74px; border-right: 0; }
.icons {
  display: flex;
  gap: 11px;
  height: 32px;
  align-items: center;
}
.ico {
  width: 32px;
  height: 32px;
  flex: none;
}
.ico-wide {
  width: 34px;
  margin-right: -2px;
}
.g-insert .icons {
  gap: 12px;
}
.ins-bolt {
  width: 30px;
  height: 32px;
  flex: none;
}
.ins-image {
  width: 30px;
  height: 30px;
  flex: none;
}
.sel-ico {
  width: 38px;
  height: 38px;
  margin: -3px 0;
}
.g-label {
  margin-top: 7px;
  font-size: 10px;
  line-height: 12px;
  white-space: nowrap;
  color: #4a5560;
}
.g-create .g-label {
  margin-right: 2px;
}
.g-modify .g-label {
  margin-right: 5px;
}
.g-assemble .g-label {
  margin-left: 4px;
}

/* canvas */
.canvas {
  flex: 1;
  position: relative;
  background: #fff;
  overflow: hidden;
}
.scene {
  position: absolute;
  left: 0;
  top: 0;
  width: 1303px;
  height: 578px;
}
.vc-z, .vc-x {
  font: bold 10px "Liberation Sans", Arial, sans-serif;
}
.vc-z { fill: #8c8cf5; font-size: 11px; }
.vc-x { fill: #f0a0a0; }
.vc-t {
  font: 9px "Liberation Sans", Arial, sans-serif;
  fill: #9a9a9a;
}
.side {
  position: absolute;
  left: 0;
  top: 4px;
  width: 304px;
}
.panel {
  margin-left: 4px;
  width: 300px;
  height: 25px;
  box-sizing: border-box;
  display: flex;
  align-items: center;
  background: #f0f0f0;
  border: 1px solid #ccc;
  position: relative;
}
.p-rew {
  position: absolute;
  left: 5px;
  top: 9px;
  width: 10px;
  height: 7px;
}
.p-title {
  margin-left: 24px;
  padding-bottom: 1px;
  font-size: 10px;
  color: #5b6670;
}
.p-btn {
  margin-left: auto;
  margin-right: 11px;
  width: 9px;
  height: 9px;
  border-radius: 50%;
  background: #222;
  color: #f0f0f0;
  font: bold 9px/9px "Liberation Sans", Arial, sans-serif;
  text-align: center;
}
.comments {
  position: absolute;
  left: 0;
  bottom: 4px;
}
.tree {
  list-style: none;
  margin: 5px 0 0;
  padding: 0;
}
.row {
  height: 20px;
  display: flex;
  margin-bottom: 4px;
}
.arrow-cell {
  display: flex;
  justify-content: flex-end;
  align-items: center;
  padding-right: 8px;
  box-sizing: border-box;
  flex: none;
}
.arrow-open {
  width: 12px;
  height: 12px;
}
.arrow-closed {
  width: 10px;
  height: 13px;
}
.chip {
  display: flex;
  align-items: center;
  background: #f0f0f0;
  padding-left: 3px;
  box-sizing: border-box;
  font-size: 10.700px;
  color: #4a5560;
  white-space: nowrap;
}
.eye {
  width: 16px;
  height: 12px;
  margin-right: 9px;
  flex: none;
}
.tree-ico {
  width: 16px;
  height: 16px;
  flex: none;
}
.tree-ico.gear {
  width: 14px;
  height: 14px;
}
.root-bar {
  width: 98px;
  height: 20px;
  margin-left: -3px;
  background: #9a9a9a;
  display: flex;
  align-items: center;
  color: #fff;
  flex: none;
}
.root-bar svg {
  width: 16px;
  height: 16px;
  margin-left: 3px;
}
.root-bar b {
  margin-left: 14px;
  font-size: 10.500px;
  letter-spacing: .1px;
}
.radio {
  width: 11px;
  height: 11px;
  margin-left: 4px;
  border: 1px solid #333;
  border-radius: 50%;
  background: radial-gradient(circle, #333 0 2.500px, #fff 3px);
}

.navbar {
  position: absolute;
  left: 533px;
  bottom: 6px;
  width: 237px;
  height: 24px;
  background: #f0f0f0;
  display: flex;
  align-items: center;
  padding-left: 3px;
  box-sizing: border-box;
}
.navbar svg,
.navbar .caret {
  flex: none;
}
.n-orbit { width: 17px; height: 17px; }
.n-look { width: 16px; height: 16px; margin-left: 6px; }
.n-pan { width: 16px; height: 16px; margin-left: 10px; }
.n-zoom { width: 18px; height: 16px; margin-left: 8px; }
.n-fit { width: 18px; height: 18px; margin-left: 9px; }
.n-display { width: 16px; height: 16px; margin-left: 7px; }
.n-grid { width: 16px; height: 16px; margin-left: 6px; }
.n-views { width: 15px; height: 15px; margin-left: 6px; }
.n-orbit + .caret { margin-left: 4px; }
.n-fit + .caret { margin-left: 4px; }
.n-display + .caret { margin-left: 1px; }
.n-grid + .caret { margin-left: 3px; }
.n-views + .caret { margin-left: 3px; }

/* timeline */
.timeline {
  height: 50px;
  flex: none;
  background: #f0f0f0;
  display: flex;
  align-items: center;
  position: relative;
  border-top: 1px solid #e0e0e0;
  box-sizing: border-box;
}
.transport {
  display: flex;
  gap: 11px;
  margin-left: 10px;
  width: 136px;
  flex: none;
  align-items: center;
}
.transport svg {
  width: 14px;
  height: 14px;
}
.transport .t-play {
  height: 16px;
}
.history {
  display: flex;
  gap: 9px;
  position: relative;
  align-self: stretch;
  padding-top: 15px;
  box-sizing: border-box;
}
.h-ico {
  width: 15px;
  height: 15px;
}
.h-ico.faded {
  opacity: .3;
}
.h-rail {
  position: absolute;
  left: 8px;
  top: 34px;
  width: 216px;
  height: 7px;
  border-bottom: 2px solid #ccc;
  box-sizing: border-box;
  display: flex;
  justify-content: space-between;
}
.h-rail span {
  width: 2px;
  background: #ccc;
}
.h-marker {
  position: absolute;
  left: 91px;
  top: 9px;
  width: 2px;
  height: 32px;
  background: #555;
}
.h-marker::before {
  content: "";
  position: absolute;
  left: -5px;
  top: 0;
  border-left: 6px solid transparent;
  border-right: 6px solid transparent;
  border-top: 8px solid #555;
}
.t-gear {
  margin-left: auto;
  margin-right: 14px;
  width: 15px;
  height: 15px;
}

/* capture overlay */
.capture {
  position: absolute;
  left: 1236px;
  top: 0;
  width: 67px;
  height: 26px;
  background: #111;
  border-radius: 0 0 0 5px;
  display: flex;
  align-items: center;
}
.c-pin { width: 10px; height: 20px; margin-left: 3px; }
.c-cam { width: 20px; height: 15px; margin-left: 8px; }
.c-vid { width: 20px; height: 13px; margin-left: 8px; }

/* windows taskbar */
.taskbar {
  width: 63px;
  flex: none;
  background: linear-gradient(#2d2a29, #37302b 30%, #2a2523 70%, #1e1d1d);
  display: flex;
  flex-direction: column;
  align-items: stretch;
  color: #fff;
  font-family: "Open Sans", sans-serif;
}
.task {
  height: 30px;
  display: flex;
  align-items: center;
  justify-content: center;
  position: relative;
  flex: none;
}
.task svg {
  width: 16px;
  height: 16px;
}
.t-tile {
  height: 34px;
}
.task.active {
  background: #5e5955;
  box-shadow: inset -2px 0 #f6dfba;
}
.running {
  height: 31px;
}
.running::after {
  content: "";
  position: absolute;
  right: 0;
  top: 5px;
  bottom: 4px;
  width: 2px;
  background: #f6dfba;
}
.weather {
  margin-top: 270px;
  position: relative;
  text-align: center;
  height: 40px;
}
.weather svg {
  width: 24px;
  height: 18px;
  display: block;
  margin: 0 auto;
}
.badge {
  position: absolute;
  left: 34px;
  top: -4px;
  width: 11px;
  height: 11px;
  border-radius: 50%;
  background: #d13438;
  font-size: 8px;
  line-height: 11px;
  text-align: center;
}
.temp {
  font-size: 12.500px;
  line-height: 16px;
  margin-top: 5px;
}
.tray-chev {
  margin-top: 22px;
  padding-right: 30px;
  text-align: center;
  height: 14px;
}
.tray-chev svg {
  width: 8px;
  height: 14px;
}
.tray {
  margin-top: 8px;
  padding-right: 4px;
  display: grid;
  grid-template-columns: 24px 24px;
  justify-content: center;
  grid-auto-rows: 24px;
  justify-items: center;
  align-items: center;
  column-gap: 1px;
}
.tray svg {
  width: 16px;
  height: 16px;
}
.clock {
  margin-top: 12px;
  text-align: center;
  font-size: 11px;
  line-height: 17px;
}
.notify {
  margin-top: 18px;
  text-align: center;
}
.notify svg {
  width: 16px;
  height: 16px;
}
</style>

<style>
html, body {
  margin: 0;
  background: #fff;
  overflow: hidden;
}
</style>
